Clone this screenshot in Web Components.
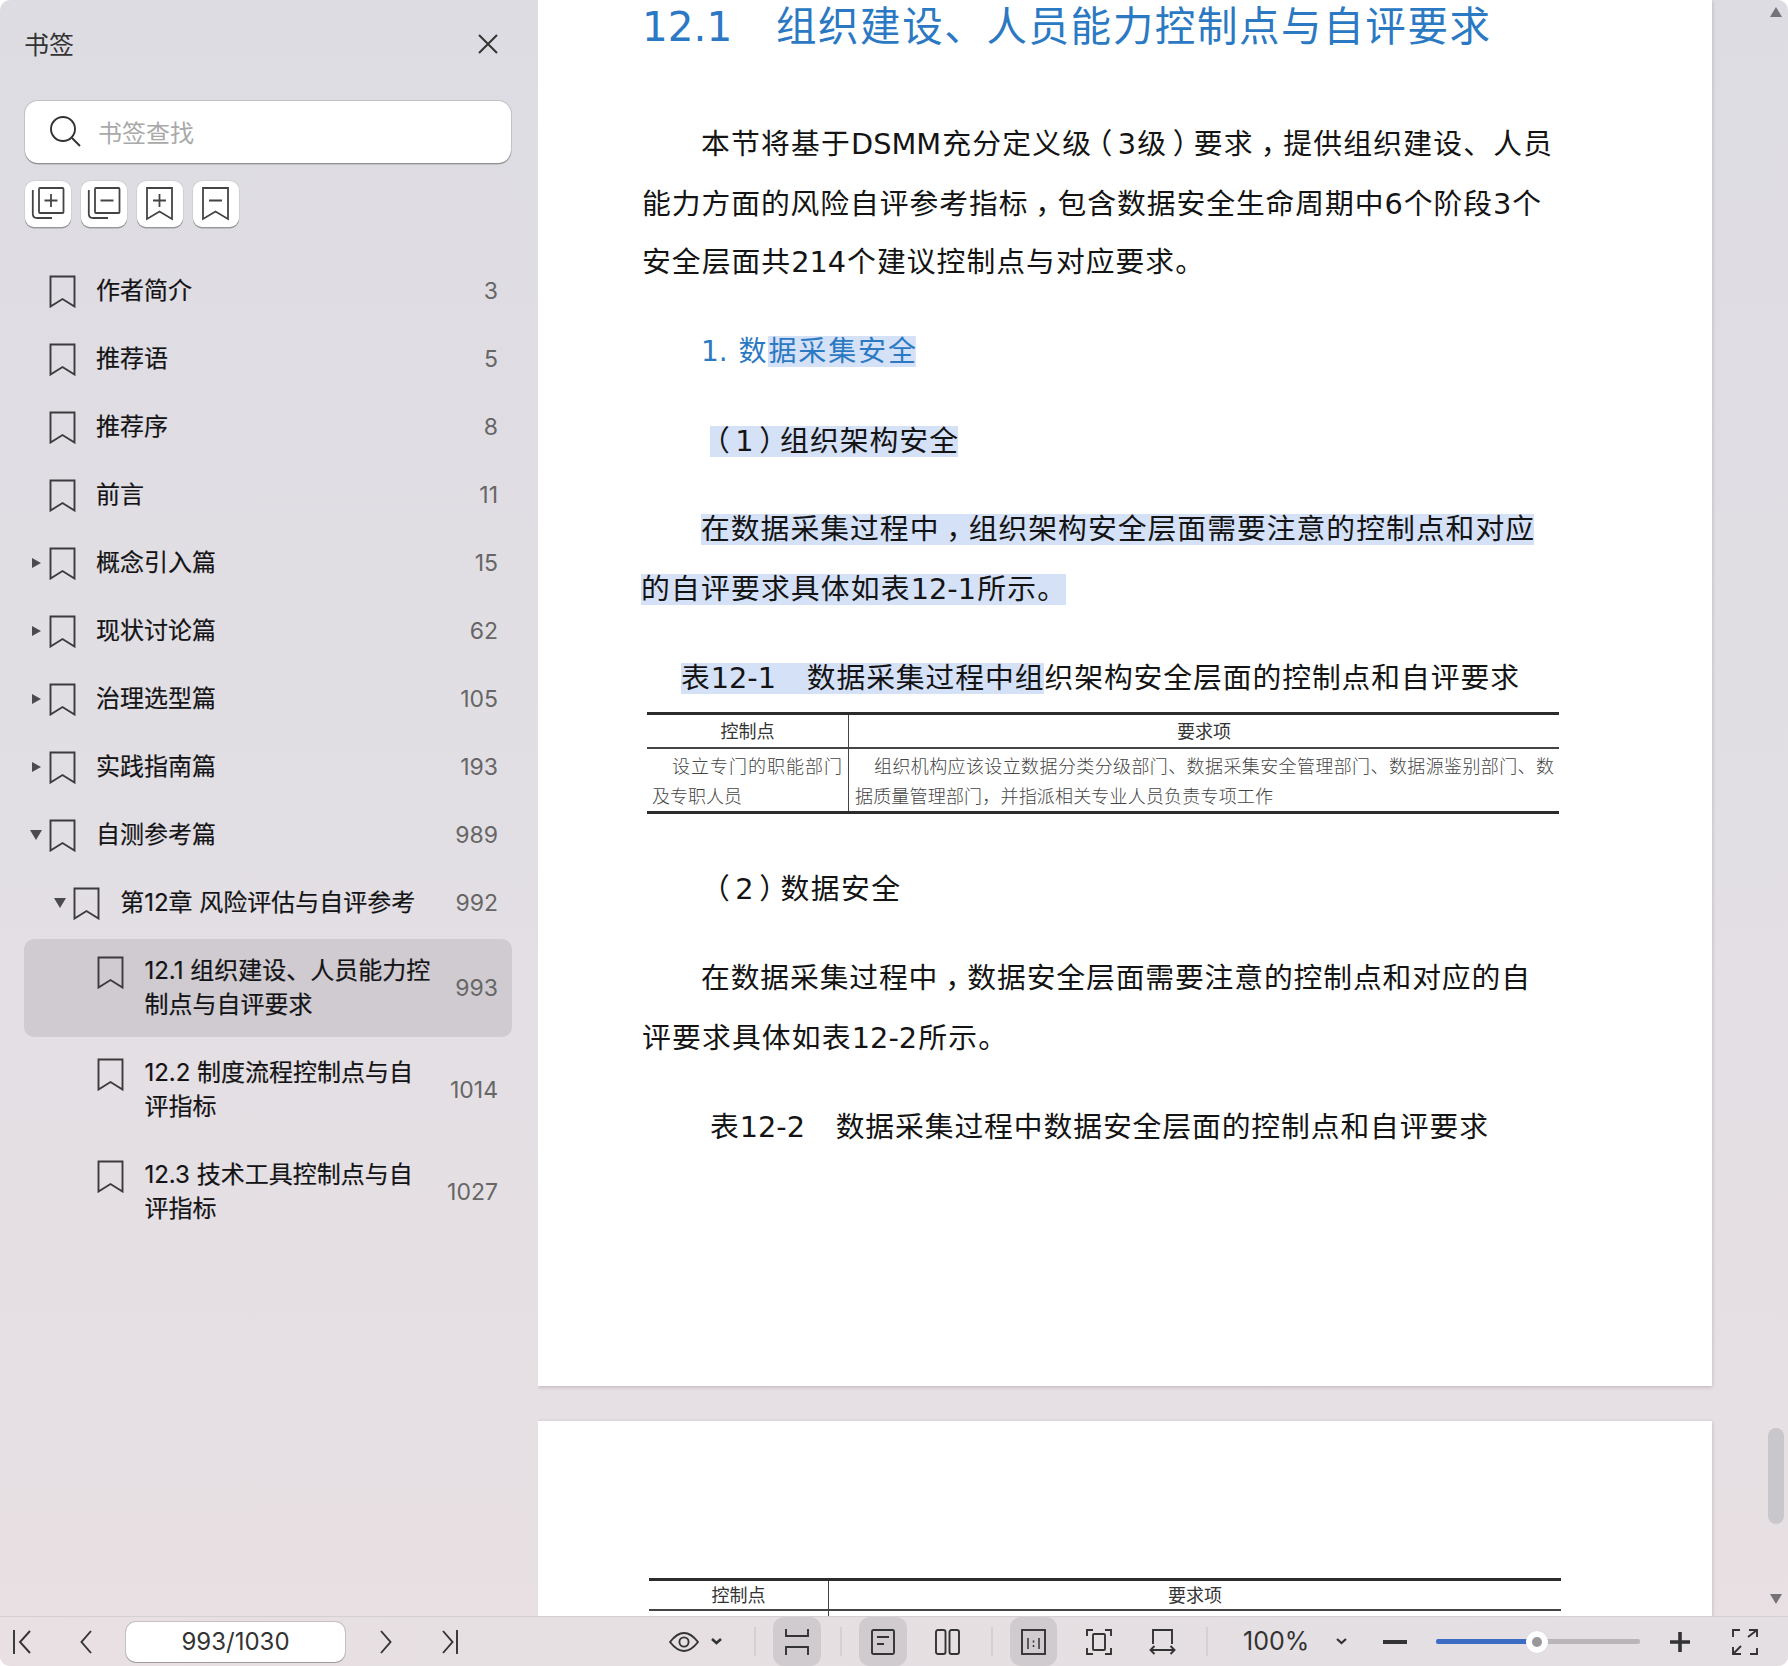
<!DOCTYPE html>
<html lang="zh"><head><meta charset="utf-8"><title>书签</title>
<style>
html,body{margin:0;padding:0;background:#fff}
body{width:1788px;height:1666px;overflow:hidden}
</style></head>
<body>
<reader-app>
  <bookmark-panel slot="side">
    <bm-row page="3">作者简介</bm-row>
    <bm-row page="5">推荐语</bm-row>
    <bm-row page="8">推荐序</bm-row>
    <bm-row page="11">前言</bm-row>
    <bm-row page="15" caret="right">概念引入篇</bm-row>
    <bm-row page="62" caret="right">现状讨论篇</bm-row>
    <bm-row page="105" caret="right">治理选型篇</bm-row>
    <bm-row page="193" caret="right">实践指南篇</bm-row>
    <bm-row page="989" caret="down">自测参考篇</bm-row>
    <bm-row page="992" caret="down" level="1">第12章 风险评估与自评参考</bm-row>
    <bm-row page="993" level="2" multi selected>12.1 组织建设、人员能力控<br>制点与自评要求</bm-row>
    <bm-row page="1014" level="2" multi>12.2 制度流程控制点与自<br>评指标</bm-row>
    <bm-row page="1027" level="2" multi>12.3 技术工具控制点与自<br>评指标</bm-row>
  </bookmark-panel>
  <doc-view slot="doc">
    <pdf-page style="--h:1386px">
      <pdf-line kind="title" style="--x:104px;--w:848px;--mt:7px">12.1　组织建设、人员能力控制点与自评要求</pdf-line>
      <pdf-line style="--x:163px;--w:851px;--mt:77px">本节将基于DSMM充分定义级<p-s>（</p-s>3级<p-s>）</p-s>要求<p-s c>，</p-s>提供组织建设、人员</pdf-line>
      <pdf-line style="--x:104px;--w:899px;--mt:20px">能力方面的风险自评参考指标<p-s c>，</p-s>包含数据安全生命周期中6个阶段3个</pdf-line>
      <pdf-line style="--x:104px;--w:562px;--mt:18px">安全层面共214个建议控制点与对应要求。</pdf-line>
      <pdf-line kind="blue" style="--x:163px;--w:215px;--mt:50px">1. 数<sel-mark>据采集安全</sel-mark></pdf-line>
      <pdf-line style="--x:172px;--w:248px;--mt:49px"><sel-mark><p-s>（</p-s>1<p-s>）</p-s>组织架构安全</sel-mark></pdf-line>
      <pdf-line style="--x:163px;--w:833px;--mt:48px"><sel-mark>在数据采集过程中<p-s c>，</p-s>组织架构安全层面需要注意的控制点和对应</sel-mark></pdf-line>
      <pdf-line style="--x:103px;--w:425px;--mt:20px"><sel-mark>的自评要求具体如表12-1所示。</sel-mark></pdf-line>
      <pdf-line style="--x:143px;--w:838px;--mt:49px"><sel-mark>表12-1　数据采集过程中组</sel-mark>织架构安全层面的控制点和自评要求</pdf-line>
      <pdf-table style="--x:109px;--w:912px;--c1:202px;--mt:14px;--hh:32px;--bh:62px">
        <span slot="h1">控制点</span><span slot="h2">要求项</span>
        <pdf-line slot="c1" kind="cell" style="--mt:0px;--x:25px;--w:170px">设立专门的职能部门</pdf-line>
        <pdf-line slot="c1" kind="cell" style="--mt:0px;--x:5px;--w:90px">及专职人员</pdf-line>
        <pdf-line slot="c2" kind="cell" style="--mt:0px;--x:25px;--w:680px">组织机构应该设立数据分类分级部门、数据采集安全管理部门、数据源鉴别部门、数</pdf-line>
        <pdf-line slot="c2" kind="cell" style="--mt:0px;--x:6px;--w:418px">据质量管理部门，并指派相关专业人员负责专项工作</pdf-line>
      </pdf-table>
      <pdf-line style="--x:172px;--w:190px;--mt:55px"><p-s>（</p-s>2<p-s>）</p-s>数据安全</pdf-line>
      <pdf-line style="--x:163px;--w:829px;--mt:49px">在数据采集过程中<p-s c>，</p-s>数据安全层面需要注意的控制点和对应的自</pdf-line>
      <pdf-line style="--x:104px;--w:365px;--mt:20px">评要求具体如表12-2所示。</pdf-line>
      <pdf-line style="--x:172px;--w:778px;--mt:49px">表12-2　数据采集过程中数据安全层面的控制点和自评要求</pdf-line>
    </pdf-page>
    <pdf-page style="--h:400px;--gap:35px">
      <pdf-table style="--x:111px;--w:912px;--c1:180px;--mt:157px;--hh:28px;--bh:20px">
        <span slot="h1">控制点</span><span slot="h2">要求项</span>
      </pdf-table>
    </pdf-page>
    <doc-scrollbar></doc-scrollbar>
  </doc-view>
  <reader-toolbar slot="bar"></reader-toolbar>
</reader-app>

<script>
const CJK = '"Noto Sans CJK SC"';
function def(name, css, html, init){
  const t=document.createElement('template');
  t.innerHTML=`<style>${css}</style>${html}`;
  customElements.define(name,class extends HTMLElement{
    constructor(){super();this.attachShadow({mode:'open'}).appendChild(t.content.cloneNode(true));}
    connectedCallback(){if(init)init(this,this.shadowRoot);}
  });
}

def('reader-app',`
:host{display:grid;grid-template-columns:538px 1250px;grid-template-rows:1616px 50px;width:1788px;height:1666px;border-radius:10px;overflow:hidden;
 background:linear-gradient(180deg,#dddce2 0%,#e2dfe4 50%,#e8e0e3 100%);font-family:Inter,${CJK},sans-serif;color:#222}
::slotted([slot=bar]){grid-column:1 / 3}
`,`<slot name="side"></slot><slot name="doc"></slot><slot name="bar"></slot>`);

const mk=(d,w=46,h=46)=>`<svg width="${w}" height="${h}" viewBox="0 0 ${w} ${h}" fill="none" stroke="#444" stroke-width="1.8">${d}</svg>`;
def('bookmark-panel',`
:host{display:block;padding:0 26px 0 24px;box-sizing:border-box;height:1616px;overflow:hidden}
.head{display:flex;justify-content:space-between;align-items:center;height:88px;margin:0 14px 0 1px;font:400 25px/1 ${CJK},sans-serif;color:#333}
.head span{margin-left:-1px;margin-top:-2px}
.head svg{display:block}
.search{display:flex;align-items:center;box-sizing:border-box;height:62px;margin:13px 1px 0 1px;background:#fff;border-radius:13px;
 box-shadow:0 0 0 1px rgba(0,0,0,.12),0 1.5px 0 rgba(0,0,0,.25);padding-left:24px;font:400 24px/1 ${CJK},sans-serif;color:#a9a9a9}
.search svg{margin-right:17px}
.tools{display:flex;gap:10px;margin:18px 0 0 1px}
.tool{width:46px;height:46px;background:#fff;border-radius:9px;box-shadow:0 0 0 .5px rgba(0,0,0,.12),0 1.5px 0 rgba(0,0,0,.28)}
.tool svg{display:block}
.list{display:flex;flex-direction:column;gap:4px;margin-top:32px}
`,`
<div class="head"><span>书签</span><svg width="20" height="20" viewBox="0 0 20 20" fill="none" stroke="#333" stroke-width="2"><path d="M1 1 19 19M19 1 1 19"/></svg></div>
<div class="search"><svg width="32" height="32" viewBox="0 0 32 32" fill="none" stroke="#333" stroke-width="1.9"><circle cx="14" cy="13" r="12"/><path d="M23 22 31 30"/></svg><span>书签查找</span></div>
<div class="tools">
 <div class="tool">${mk('<rect x="14" y="7" width="24.5" height="25" rx="1"/><path d="M26 13V26M19.5 19.5H32.5M7.8 9V33Q7.8 37 12 37H27"/>')}</div>
 <div class="tool">${mk('<rect x="14" y="7" width="24.5" height="25" rx="1"/><path d="M19.5 19.5H32.5M7.8 9V33Q7.8 37 12 37H27"/>')}</div>
 <div class="tool">${mk('<path d="M10 7H35V38L22.5 30.5 10 38Z"/><path d="M22.5 13V26M16 19.5H29"/>')}</div>
 <div class="tool">${mk('<path d="M10 7H35V38L22.5 30.5 10 38Z"/><path d="M16 19.5H29"/>')}</div>
</div>
<div class="list"><slot></slot></div>`);

def('bm-row',`
:host{display:flex;align-items:center;box-sizing:border-box;min-height:64px;border-radius:10px;font:400 24px/34px Inter,${CJK},sans-serif;color:#141416;padding-right:14px}
:host([multi]){height:98px;align-items:flex-start}
:host([selected]){background:#cfcbd0}
.caret{flex:none;width:19px;height:12px;display:block}
.ic{flex:none;display:block;margin-right:20px}
:host([multi]) .caret{margin-top:17px}
:host([multi]) .ic{margin-top:17px}
.txt{flex:1;white-space:nowrap;min-width:0;-webkit-text-stroke:.2px currentColor}
:host([multi]) .txt{margin-top:15px}
.num{flex:none;font:400 23px/34px Inter,sans-serif;color:#666}
:host([multi]) .num{align-self:center}
`,`<span id="pad"></span><span class="caret" id="car"></span>
<svg class="ic" width="27" height="33" viewBox="0 0 27 33" fill="none" stroke="#3c3a3d" stroke-width="1.9"><path d="M1.5 1.5H25.5V31.5L13.5 24 1.5 31.5Z"/></svg>
<span class="txt"><slot></slot></span><span class="num" id="n"></span>`,
(h,s)=>{
 const l=+h.getAttribute('level')||0;
 s.getElementById('pad').style.cssText=`flex:none;width:${6+24.2*l}px`;
 s.getElementById('n').textContent=h.getAttribute('page');
 const c=h.getAttribute('caret');
 if(c==='down') s.getElementById('car').innerHTML='<svg width="12" height="12" viewBox="0 0 12 12" style="display:block"><path d="M0 1H12L6 11Z" fill="#4c4a4d"/></svg>';
 if(c==='right') s.getElementById('car').innerHTML='<svg width="12" height="12" viewBox="0 0 12 12" style="display:block"><path d="M2 1 11 6 2 11Z" fill="#4c4a4d"/></svg>';
});

def('doc-view',`
:host{display:block;position:relative;height:1616px;overflow:hidden}
`,`<slot></slot>`);

def('pdf-page',`
:host{display:flow-root;width:1174px;height:var(--h);margin-top:var(--gap,0);background:#fff;box-shadow:0 1px 4px rgba(0,0,0,.2)}
`,`<slot></slot>`);

def('pdf-line',`
:host{display:block;box-sizing:border-box;height:40px;margin:var(--mt,0) 0 0 var(--x,0);width:var(--w);
 font:400 28.800px/40px "DejaVu Sans",${CJK},sans-serif;color:#141414;text-align:justify;text-align-last:justify}
:host([kind=title]){font-size:40.500px;color:#2b79c3}
:host([kind=blue]){color:#2b79c3;font-size:28px}
:host([kind=cell]){height:30px;font:300 18px/30px ${CJK},sans-serif;color:#444;letter-spacing:0}
`,`<slot></slot>`);

def('sel-mark',`
:host{background:linear-gradient(#d5e1f7,#d5e1f7) center/100% 31px no-repeat}
`,`<slot></slot>`);

def('p-s',`
:host{display:inline-block;font-feature-settings:"halt";text-align:left;text-align-last:left;padding:0 .19em}
:host([c]){padding:0 .24em}
`,`<slot></slot>`);

def('pdf-table',`
:host{display:block;margin:var(--mt,0) 0 0 var(--x,0);width:var(--w);border-top:3px solid #2c2c2c;font:400 18px/1 ${CJK},sans-serif;color:#333}
.row{display:grid;grid-template-columns:var(--c1) 1fr}
.row>div{box-sizing:border-box}
.row>div:first-child{border-right:1.5px solid #444}
.h{border-bottom:2.5px solid #444}
.h>div{height:var(--hh);display:flex;align-items:center;justify-content:center;padding-bottom:3px}
.b>div{height:var(--bh);padding-top:1px}
.b{border-bottom:3px solid #2c2c2c}
`,`<div class="row h"><div><slot name="h1"></slot></div><div><slot name="h2"></slot></div></div>
<div class="row b" id="b"><div><slot name="c1"></slot></div><div><slot name="c2"></slot></div></div>`,
(h,s)=>{ if(!h.querySelector('[slot=c1]')){const b=s.getElementById('b');b.style.borderBottom='none';} });

def('doc-scrollbar',`
:host{position:absolute;left:1228px;top:0;width:20px;height:1616px;display:flex;flex-direction:column;align-items:center}
.up,.dn{width:0;height:0;border-left:6px solid transparent;border-right:6px solid transparent}
.up{border-bottom:10px solid #757377;margin-top:7px}
.dn{border-top:10px solid #757377;margin-top:70px}
.th{width:16px;height:96px;border-radius:8px;background:#c9c7cc;margin-top:1411px}
`,`<div class="up"></div><div class="th"></div><div class="dn"></div>`);

const S=(w,h,d)=>`<svg width="${w}" height="${h}" viewBox="0 0 ${w} ${h}" fill="none" stroke="#333" stroke-width="1.9" style="display:block;flex:none">${d}</svg>`;
def('reader-toolbar',`
:host{display:flex;align-items:center;box-sizing:border-box;height:50px;border-top:1.5px solid #d4cfd2;background:linear-gradient(90deg,#e8e0e3,#e3dfe2)}
.f{flex:none}
.pg{flex:none;width:219px;height:40px;box-sizing:border-box;margin-left:34px;background:#fff;border-radius:10px;box-shadow:0 0 0 1px rgba(0,0,0,.14),0 1px 0 rgba(0,0,0,.2);
 display:flex;align-items:center;justify-content:center;font:400 24px/1 Inter,sans-serif;color:#333}
.sep{flex:none;width:2px;height:29px;background:#d5d0d3}
.hl{flex:none;align-self:stretch;display:flex;align-items:center;justify-content:center;background:#cfcbcf;border-radius:11px}
.zoom{flex:none;width:65px;font:400 25px/1 Inter,sans-serif;color:#333;white-space:nowrap}
.slider{flex:none;width:204px;height:22px;display:flex;align-items:center;margin-left:29px}
.a{width:92px;height:5px;background:#3d6cc5;border-radius:2px 0 0 2px}
.k{flex:none;width:22px;height:22px;border-radius:50%;background:#fff;margin:0 -2px;position:relative;z-index:1;display:flex;align-items:center;justify-content:center;box-shadow:0 0 1px rgba(0,0,0,.2)}
.k i{display:block;width:10px;height:10px;border-radius:50%;background:#9a989b}
.r{flex:1;height:5px;background:#b9b5b8;border-radius:0 2px 2px 0}
`,`
<div class="f" style="margin-left:13px">${S(18,24,'<path d="M1 0V24M17 1 7 12 17 23"/>')}</div>
<div class="f" style="margin-left:49px">${S(12,24,'<path d="M11 1 1.5 12 11 23"/>')}</div>
<div class="pg">993/1030</div>
<div class="f" style="margin-left:35px">${S(12,24,'<path d="M1 1 10.5 12 1 23"/>')}</div>
<div class="f" style="margin-left:50px">${S(16,24,'<path d="M15 0V24M1 1 10.5 12 1 23"/>')}</div>
<div class="f" style="margin-left:211px">${S(30,22,'<path d="M1 11Q15-7 29 11Q15 29 1 11Z"/><circle cx="15" cy="11" r="4.6"/>')}</div>
<div class="f" style="margin-left:12px">${S(11,7,'<path d="M1 1 5.500 5 10 1" stroke-width="2.6"/>')}</div>
<div class="sep" style="margin-left:32px"></div>
<div class="hl" style="margin-left:17px;width:48px">${S(24,26,'<path d="M1 0V7H23V0M1 26V18H23V26"/>')}</div>
<div class="sep" style="margin-left:19px"></div>
<div class="hl" style="margin-left:17px;width:48px">${S(24,26,'<rect x="1" y="1" width="22" height="24" rx="1.500"/><path d="M6 8H18M6 15H13"/>')}</div>
<div class="f" style="margin-left:28px">${S(25,26,'<rect x="1" y="1" width="9.500" height="24" rx="2"/><rect x="14.500" y="1" width="9.500" height="24" rx="2"/>')}</div>
<div class="sep" style="margin-left:31px"></div>
<div class="hl" style="margin-left:17px;width:47px">${S(25,26,'<rect x="1" y="1" width="23" height="24"/><path d="M7 9V20M18 9V20M12.500 11.500V13.500M12.500 16V18" stroke-width="1.500"/>')}</div>
<div class="f" style="margin-left:29px">${S(26,26,'<path d="M1 7V1H7M19 1H25V7M1 19V25H7M19 25H25V19"/><rect x="7" y="5" width="12" height="16" rx="1"/>')}</div>
<div class="f" style="margin-left:37px">${S(27,26,'<path d="M4 15V1H23V15M1.500 21H25.500M5.500 17 1.500 21 5.500 25M21.500 17 25.500 21 21.500 25"/>')}</div>
<div class="sep" style="margin-left:30px"></div>
<div class="zoom" style="margin-left:35px">100%</div>
<div class="f" style="margin-left:28px">${S(11,7,'<path d="M1 1 5.500 5 10 1" stroke-width="2.200"/>')}</div>
<div class="f" style="margin-left:36px">${S(24,4,'<path d="M0 2H24" stroke-width="4"/>')}</div>
<div class="slider"><div class="a"></div><div class="k"><i></i></div><div class="r"></div></div>
<div class="f" style="margin-left:30px">${S(20,20,'<path d="M0 10H20M10 0V20" stroke-width="3.600"/>')}</div>
<div class="f" style="margin-left:42px">${S(26,26,'<path d="M1 8V1H8M16 8 25 1M17 1H25V8M9 17 1 25M1 18V25H9M18 25H25V19"/>')}</div>
`);
</script>
</body></html>
